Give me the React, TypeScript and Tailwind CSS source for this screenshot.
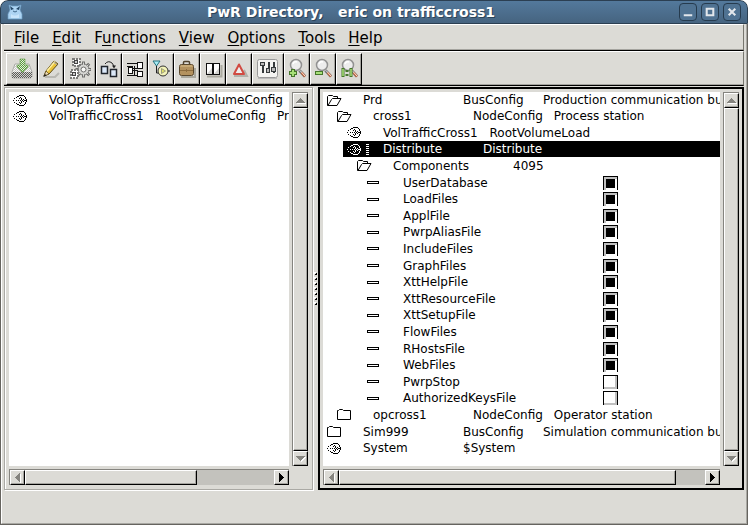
import type { ReactNode } from "react";

type IconKind = "open" | "closed" | "node" | "attr";

type Row = {
  level: number;
  icon: IconKind;
  cells: string[];
  checked?: boolean;
  selected?: boolean;
  parent?: boolean;
};

const INDENT = ["pl-1", "pl-[14px]", "pl-6", "pl-[34px]", "pl-11"];

const attribute = (name: string, checked = true): Row => ({ level: 4, icon: "attr", cells: [name], checked });

const volumeRows: Row[] = [
  { level: 0, icon: "node", cells: ["VolOpTrafficCross1", "RootVolumeConfig"] },
  { level: 0, icon: "node", cells: ["VolTrafficCross1", "RootVolumeConfig", "Pr"] },
];

const busRows: Row[] = [
  { level: 0, icon: "open", cells: ["Prd", "BusConfig", "Production communication bus"] },
  { level: 1, icon: "open", cells: ["cross1", "NodeConfig", "Process station"] },
  { level: 2, icon: "node", cells: ["VolTrafficCross1", "RootVolumeLoad"] },
  { level: 2, icon: "node", cells: ["Distribute", "Distribute"], selected: true },
  { level: 3, icon: "open", cells: ["Components", "4095"], parent: true },
  attribute("UserDatabase"),
  attribute("LoadFiles"),
  attribute("ApplFile"),
  attribute("PwrpAliasFile"),
  attribute("IncludeFiles"),
  attribute("GraphFiles"),
  attribute("XttHelpFile"),
  attribute("XttResourceFile"),
  attribute("XttSetupFile"),
  attribute("FlowFiles"),
  attribute("RHostsFile"),
  attribute("WebFiles"),
  attribute("PwrpStop", false),
  attribute("AuthorizedKeysFile", false),
  { level: 1, icon: "closed", cells: ["opcross1", "NodeConfig", "Operator station"] },
  { level: 0, icon: "closed", cells: ["Sim999", "BusConfig", "Simulation communication bus"] },
  { level: 0, icon: "node", cells: ["System", "$System"] },
];

// One string per pixel row of the object symbol.
const NODE_BITMAP = [
  "..............",
  "......#####...",
  "....##.....#..",
  "...#...#....#.",
  ".#....#.#...#.",
  "........#.#..#",
  "#..#.#.#.#.###",
  "........#.#..#",
  ".#....#.#...#.",
  "...#...#....#.",
  "....##.....#..",
  "......#####...",
  "..............",
];

const nodePath = NODE_BITMAP.map((line, y) =>
  [...line].map((dot, x) => (dot === "#" ? `M${x} ${y}h1v1h-1z` : "")).join(""),
).join("");

function RowIcon({ kind }: { kind: IconKind }) {
  return (
    <svg width="15" height="13" viewBox="0 0 15 13" fill="none" stroke="currentColor" className="shrink-0" aria-hidden="true">
      {kind === "open" && <path d="M.5 11.500v-9l1-1h4l1 1h4v2M.5 11.500h9.500l4-7H5.500l-1 1-3.500 6" />}
      {kind === "closed" && <path d="M.5 11.500v-9h1l1-1h3l1 1h7v9z" />}
      {kind === "attr" && <path d="M.5 5.500h11v2H.5z" shapeRendering="crispEdges" />}
      {kind === "node" && <path d={nodePath} fill="currentColor" stroke="none" shapeRendering="crispEdges" />}
    </svg>
  );
}

function TreeRow({ row }: { row: Row }) {
  const [name, second, third] = row.cells;
  return (
    <li className="flex h-[17px] first:h-4 nth-[5n+2]:h-4 nth-[5n+4]:h-4">
      <div className={`flex w-full items-center ${INDENT[row.level]}`}>
        <div
          className={`flex h-full min-w-0 grow items-center ${row.selected ? "-ml-1 bg-black pl-1 text-white" : ""}`}
        >
          <div className="flex w-9 shrink-0 items-center gap-1">
            <RowIcon kind={row.icon} />
            {row.selected && (
              <svg width="3" height="11" viewBox="0 0 3 11" aria-hidden="true">
                <path d="M0 .5h3M0 2.500h3M0 4.500h3M0 6.500h3M0 8.500h3M0 10.500h3" stroke="currentColor" shapeRendering="crispEdges" />
              </svg>
            )}
          </div>
          {row.checked !== undefined ? (
            <label className="flex items-center">
              <span className="w-[200px]">{name}</span>
              <input
                type="checkbox"
                defaultChecked={row.checked}
                className="h-[14px] w-[15px] appearance-none border-x border-t border-black bg-white bg-[length:9px_9px] bg-center bg-no-repeat shadow-[inset_-2px_-2px_0_#c0c0c0] checked:bg-[linear-gradient(#000,#000)] checked:shadow-[inset_2px_2px_0_#c0c0c0]"
              />
            </label>
          ) : (
            <>
              <span className={`shrink-0 pr-3 ${row.parent ? "min-w-[120px]" : "min-w-[100px]"}`}>{name}</span>
              <span className="min-w-20 shrink-0 pr-[11px]">{second}</span>
              <span>{third}</span>
            </>
          )}
        </div>
      </div>
    </li>
  );
}

const ARROWS = {
  up: "M4 0h1v1h1v1h1v1h1v1h1v1H0V4h1V3h1V2h1V1h1z",
  down: "M0 0h9v1H8v1H7v1H6v1H5v1H4V4H3V3H2V2H1V1H0z",
  left: "M5 0v9H4V8H3V7H2V6H1V5H0V4h1V3h1V2h1V1h1V0z",
  right: "M0 0v9h1V8h1V7h1V6h1V5h1V4H4V3H3V2H2V1H1V0z",
};

const RAISED = "border border-t-white border-r-black border-b-black border-l-white bg-[#dcdbd6] shadow-[inset_-1px_-1px_0_#a5a49f]";

function ArrowButton({ dir, dim }: { dir: keyof typeof ARROWS; dim?: boolean }) {
  const sideways = dir === "left" || dir === "right";
  return (
    <button
      type="button"
      aria-label={`Scroll ${dir}`}
      className={`flex size-[15px] shrink-0 items-center justify-center ${RAISED}`}
    >
      <svg
        width={sideways ? 5 : 9}
        height={sideways ? 9 : 5}
        className={dim ? "fill-[#85847f] drop-shadow-[1px_1px_0_#fff]" : "fill-black"}
        aria-hidden="true"
      >
        <path d={ARROWS[dir]} />
      </svg>
    </button>
  );
}

function Pane({ rows, thumb, label }: { rows: Row[]; thumb: string; label: string }) {
  return (
    <div className="grid min-w-0 grow grid-cols-[minmax(0,1fr)_16px] grid-rows-[1fr_16px] gap-[3px] p-[3px]">
      <ul aria-label={label} className="overflow-hidden bg-white text-[12px] leading-4 whitespace-nowrap">
        {rows.map((row) => (
          <TreeRow key={row.cells[0]} row={row} />
        ))}
      </ul>
      <div className="flex flex-col border-t border-l border-[#85847f] bg-[#c3c2bd]">
        <ArrowButton dir="up" dim />
        <div className={`grow ${RAISED}`} />
        <ArrowButton dir="down" dim />
      </div>
      <div className="flex border-t border-l border-[#85847f] bg-[#c3c2bd]">
        <ArrowButton dir="left" dim />
        <div className="flex grow">
          <div className={`${thumb} ${RAISED}`} />
        </div>
        <ArrowButton dir="right" />
      </div>
    </div>
  );
}

function Magnifier({ children }: { children: ReactNode }) {
  return (
    <>
      <path d="M13.500 12.500l5.500 6" stroke="#777" strokeWidth="3" />
      <path d="M15.500 14.500l3.500 4" stroke="#c9663a" strokeWidth="2" />
      <path d="M14 12.500l5 5.500" stroke="#fff" strokeWidth=".8" />
      <circle cx="10" cy="7" r="5.500" fill="#ededed" stroke="#929292" strokeWidth="1.500" />
      <path d="M7 6q1-3 4-2" stroke="#fff" strokeWidth="1.500" />
      {children}
    </>
  );
}

type Tool = { label: string; wide?: boolean; drawing: ReactNode };

const tools: Tool[] = [
  {
    label: "Save",
    wide: true,
    drawing: (
      <>
        <defs>
          <pattern id="dots" width="2" height="2" patternUnits="userSpaceOnUse">
            <path d="M0 0h1v1H0zM1 1h1v1H1z" fill="#5a5a58" />
          </pattern>
          <pattern id="leaf" width="2" height="2" patternUnits="userSpaceOnUse">
            <path d="M0 0h1v1H0zM1 1h1v1H1z" fill="#5c9c40" />
          </pattern>
        </defs>
        <path d="M4 6h14l3 8v5l-1 1H2l-1-1v-5z" fill="#fafaf8" stroke="#a9a9a5" />
        <path d="M4 7h14l2 7H2z" fill="url(#dots)" opacity=".35" />
        <path d="M1 14h20v6H1z" fill="#d3d3cf" />
        <path d="M1 14h20v6H1z" fill="url(#dots)" />
        <path d="M9 1h5v6h3v2l-5.500 5.500L6 9V7h3z" fill="#e4efdd" stroke="#8fb67c" />
        <path d="M9 1h5v6h3v2l-5.500 5.500L6 9V7h3z" fill="url(#leaf)" />
      </>
    ),
  },
  {
    label: "Edit",
    drawing: (
      <>
        <path d="M5 19h10l4-4" stroke="#b9b8b2" strokeWidth="2" />
        <path d="M4 18l2-5L14 3l4 3L9 16z" fill="#e9c23a" stroke="#5c4a16" />
        <path d="M7 13l8-9.500" stroke="#fff0a0" strokeWidth="1.500" />
        <path d="M4 18l2-5 3 3z" fill="#ecd9b8" stroke="#5c4a16" strokeWidth=".7" />
        <path d="M3 19l2-3 1.500 1.500z" fill="#222" />
        <path d="M13.500 4l4 3" stroke="#aaa" />
      </>
    ),
  },
  {
    label: "Build",
    wide: true,
    drawing: (
      <>
        <g stroke="#6f6f6d" strokeWidth="3">
          <path d="M14.500 3.500v16M6.500 11.500h16M8.800 5.800l11.400 11.400M20.200 5.800L8.800 17.200" />
        </g>
        <circle cx="14.500" cy="11.500" r="5.500" fill="#d6d6d3" stroke="#6f6f6d" />
        <path d="M14.500 4.500v14M7.500 11.500h14M9.500 6.500l10 10M19.500 6.500l-10 10" stroke="#d6d6d3" />
        <circle cx="14.500" cy="11.500" r="2.500" fill="#f8f8f6" stroke="#6f6f6d" />
        <g fill="#fff" stroke="#7c7c7a" strokeDasharray="2 1" shapeRendering="crispEdges">
          <path d="M3.500 .5h7v7h-7zM1.500 11.500h7v8h-7z" strokeWidth="2" />
        </g>
        <path d="M5.500 2.500h3v3h-3zM3.500 14.500h3v3h-3z" fill="#ccc" stroke="#444" shapeRendering="crispEdges" />
      </>
    ),
  },
  {
    label: "Distribute",
    drawing: (
      <>
        <path d="M3.500 8.500h6v7h-6zM12.500 11.500h6v7h-6z" fill="#dbe8f8" stroke="#20252c" strokeWidth="1.500" />
        <path d="M7 6q3-4 7-1l2 3" stroke="#222" />
        <path d="M14 7.500h4l-2 3z" fill="#222" />
      </>
    ),
  },
  {
    label: "Configure",
    drawing: (
      <g stroke="#111" shapeRendering="crispEdges">
        <path d="M3 5.500h10M3 8.500h6M3 17.500h11M9 12.500h5M10.500 8v9" />
        <path d="M4.500 9.500h4v6h-4zM13.500 4.500h5v6h-5zM13.500 13.500h5v5h-5z" fill="#fff" />
        <path d="M8 10.500h6" />
      </g>
    ),
  },
  {
    label: "Start simulation",
    drawing: (
      <>
        <path d="M3 3h7l-3.500 5z" fill="#a8ecf5" stroke="#26707e" />
        <path d="M6.500 8v7h3" stroke="#222" />
        <circle cx="13" cy="13" r="5" fill="#f4f4b8" stroke="#333" />
        <path d="M11.500 10.500l4 2.500-4 2.500z" fill="#e2e26a" stroke="#777" strokeWidth=".7" />
        <path d="M18 13h2" stroke="#222" />
      </>
    ),
  },
  {
    label: "Volumes",
    drawing: (
      <>
        <path d="M5 19h14v-9" stroke="#aaa99f" strokeWidth="2" />
        <path d="M7.500 7V4.500q0-1 1-1h4q1 0 1 1V7" stroke="#50422d" strokeWidth="1.500" />
        <rect x="3.500" y="6.500" width="14" height="11" rx="2" fill="#b3925f" stroke="#59472c" />
        <path d="M4.500 8h12" stroke="#dabf8b" />
        <path d="M4 12.500h13M10.500 11v3" stroke="#8b6c3f" />
      </>
    ),
  },
  {
    label: "Help book",
    drawing: (
      <>
        <path d="M5 18.500h14.500V7" stroke="#aaa99f" strokeWidth="2" />
        <path d="M4.500 5.500h6v11h-6zM11.500 5.500h6v11h-6z" fill="#fff" stroke="#111" shapeRendering="crispEdges" />
        <path d="M17 10v6h-5zM10 10v6H5z" fill="#d5d5d2" />
      </>
    ),
  },
  {
    label: "Alarms",
    drawing: (
      <>
        <path d="M6 18h13l-3-6" stroke="#b2b1aa" strokeWidth="2" />
        <path d="M11 6.500l5 9.500H6z" fill="#eee" stroke="#d14b42" strokeWidth="2" strokeLinejoin="round" />
      </>
    ),
  },
  {
    label: "Advanced options",
    wide: true,
    drawing: (
      <>
        <rect x=".5" y="1.500" width="20" height="18" rx="2" fill="#f4f4f2" stroke="#999" />
        <path d="M1 20.500h19" stroke="#bbb" />
        <g stroke="#353a3c" shapeRendering="crispEdges">
          <path d="M5.500 7v8M11.500 4v6M16.500 4v5M16.500 13v2" strokeWidth="2" />
          <path d="M3.500 4.500h4v3h-4zM9.500 10.500h3v4h-3zM14.500 9.500h4v4h-4z" fill="#bbb" />
        </g>
      </>
    ),
  },
  {
    label: "Zoom in",
    drawing: (
      <Magnifier>
        <path d="M7 11v8M3 15h8" stroke="#45772a" strokeWidth="4" />
        <path d="M7 12v6M4 15h6" stroke="#a8e078" strokeWidth="2" />
      </Magnifier>
    ),
  },
  {
    label: "Zoom out",
    drawing: (
      <Magnifier>
        <path d="M3 15h8" stroke="#45772a" strokeWidth="4" />
        <path d="M4 15h6" stroke="#a8e078" strokeWidth="2" />
      </Magnifier>
    ),
  },
  {
    label: "Zoom reset",
    drawing: (
      <Magnifier>
        <path d="M5 10v9M13 10v9M9 12v2M9 16v2" stroke="#45772a" strokeWidth="3" />
        <path d="M5 11v7M13 11v7" stroke="#a8e078" strokeWidth="1.500" />
      </Magnifier>
    ),
  },
];

const menus = [
  ["", "F", "ile"],
  ["", "E", "dit"],
  ["F", "u", "nctions"],
  ["", "V", "iew"],
  ["", "O", "ptions"],
  ["", "T", "ools"],
  ["", "H", "elp"],
];

const windowControls = [
  { label: "Minimize", path: "M4 12h9" },
  { label: "Maximize", path: "M5 5h7v7H5z" },
  { label: "Close", path: "M5 5l7 7M12 5l-7 7" },
];

export default function App() {
  return (
    <div className="flex min-h-screen flex-col overflow-hidden rounded-t-lg bg-[#dcdbd6] font-['DejaVu_Sans',sans-serif] text-black">
      <header className="flex h-6 shrink-0 items-center rounded-t-lg border border-[#2b3f52] bg-linear-to-b from-[#53799c] to-[#466480] px-[6px]">
        <svg width="16" height="16" viewBox="0 0 16 16" aria-hidden="true">
          <path d="M2 1l3 1h6l3-1-1 5 2 4v5H1v-5l2-4z" fill="#add4f3" stroke="#6e9dc4" strokeWidth=".7" />
          <path d="M3 2l4 3-3 1zM13 2L9 5l3 1z" fill="#234666" />
          <path d="M6 7l2 1 2-1" fill="none" stroke="#3d6689" />
          <path d="M4 10q4 3 8 0v4H4z" fill="#c9e5fb" />
        </svg>
        <h1 className="grow text-center text-[14px] leading-5 font-bold whitespace-pre text-white [text-shadow:1px_1px_0_#2d4459]">
          {"PwR Directory,   eric on trafficcross1"}
        </h1>
        <div className="flex gap-1">
          {windowControls.map((control) => (
            <button
              key={control.label}
              type="button"
              aria-label={control.label}
              className="size-[18px] rounded-[4px] border border-[#263b4e] bg-[#4f7292]"
            >
              <svg width="16" height="16" viewBox="0 0 17 17" fill="none" stroke="#e2e7ec" strokeWidth="2.200" aria-hidden="true">
                <path d={control.path} />
              </svg>
            </button>
          ))}
        </div>
      </header>

      <div className="flex grow flex-col border-x border-b border-[#66645f]">
        <div className="flex grow flex-col border-r border-b border-l border-[#a9a8a3] border-l-white px-[2px]">
          <nav className="flex h-[27px] shrink-0 items-center gap-px border-t border-r border-b border-t-white border-r-[#77766f] border-b-black px-1 shadow-[inset_0_-1px_0_#a5a49f]">
            {menus.map(([before, key, after]) => (
              <button key={after} type="button" className="px-[6px] text-[15px] leading-5">
                {before}
                <span className="underline underline-offset-2">{key}</span>
                {after}
              </button>
            ))}
          </nav>

          <div
            role="toolbar"
            aria-label="Main tools"
            className="flex h-[35px] shrink-0 border-t border-r border-b border-t-white border-r-[#77766f] border-b-black px-[2px] pt-px shadow-[inset_0_-1px_0_#a5a49f]"
          >
            {tools.map((tool) => (
              <button
                key={tool.label}
                type="button"
                aria-label={tool.label}
                className={`flex h-8 items-center justify-center border border-t-white border-r-black border-b-black border-l-white shadow-[inset_-1px_-1px_0_#a5a49f] ${tool.wide ? "w-8" : "w-[26px]"}`}
              >
                <svg width="22" height="22" viewBox="0 0 22 22" fill="none" className="shrink-0" aria-hidden="true">
                  {tool.drawing}
                </svg>
              </button>
            ))}
          </div>

          <main className="flex grow pt-px">
            <section className="flex w-[309px] shrink-0 border border-[#aaa9a4] p-px shadow-[inset_1px_1px_0_#fff,1px_1px_0_#fff]">
              <Pane rows={volumeRows} thumb="w-[69%]" label="Volumes" />
            </section>
            <div className="flex w-[5px] shrink-0 items-center justify-center" role="separator" aria-orientation="vertical">
              <svg width="3" height="33" viewBox="0 0 3 33" aria-hidden="true" shapeRendering="crispEdges">
                {[0, 5, 10, 15, 20, 25, 30].map((y) => (
                  <g key={y}>
                    <path d={`M0 ${y}h2v1H1v1H0z`} fill="#fff" />
                    <path d={`M2 ${y + 1}h1v2H1v-1h1z`} fill="#000" />
                  </g>
                ))}
              </svg>
            </div>
            <section className="flex min-w-0 grow border-2 border-black">
              <Pane rows={busRows} thumb="w-[92%]" label="Configuration" />
            </section>
          </main>
          <footer className="h-[33px] shrink-0" />
        </div>
      </div>
    </div>
  );
}
